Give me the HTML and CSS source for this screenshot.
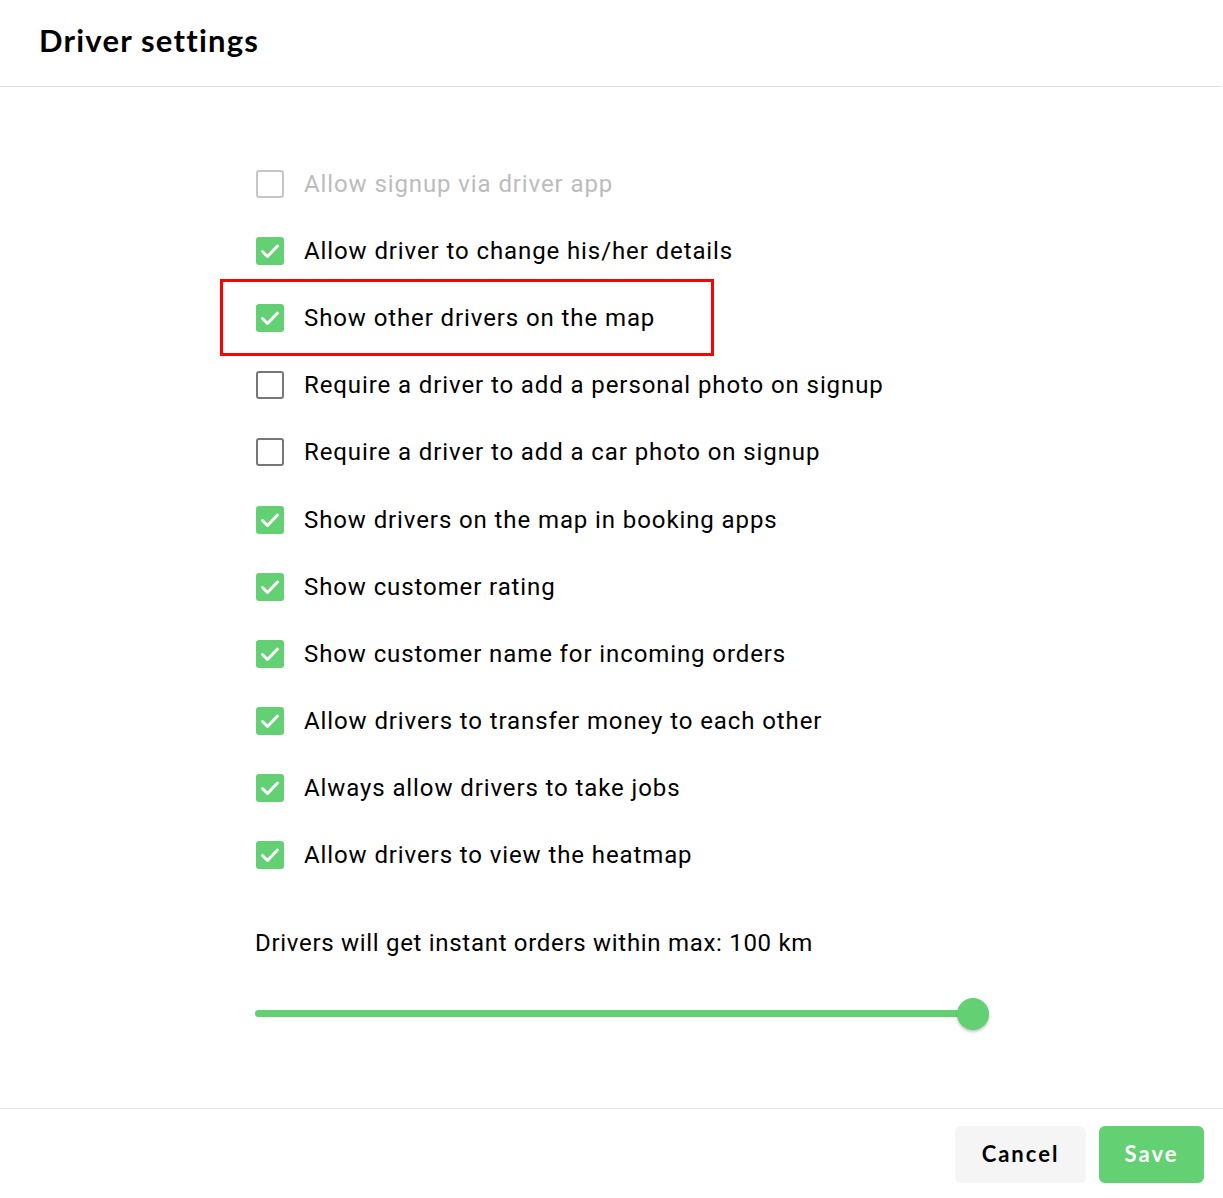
FILE: index.html
```html
<!DOCTYPE html>
<html lang="en">
<head>
<meta charset="utf-8">
<title>Driver settings</title>
<link rel="stylesheet" href="styles.css">
</head>
<body>
<div class="modal">
  <header class="modal-header">
    <h1 class="modal-title">Driver settings</h1>
  </header>
  <main class="modal-body">
    <ul class="options">
      <li class="option option--disabled"><span class="box"></span><span class="label">Allow signup via driver app</span></li>
      <li class="option"><span class="box box--checked"><svg viewBox="0 0 28 28"><path d="M6.5 14.5l5 5L21.5 9" /></svg></span><span class="label">Allow driver to change his/her details</span></li>
      <li class="option option--highlight"><span class="box box--checked"><svg viewBox="0 0 28 28"><path d="M6.5 14.5l5 5L21.5 9" /></svg></span><span class="label">Show other drivers on the map</span><span class="highlight"></span></li>
      <li class="option"><span class="box"></span><span class="label">Require a driver to add a personal photo on signup</span></li>
      <li class="option"><span class="box"></span><span class="label">Require a driver to add a car photo on signup</span></li>
      <li class="option"><span class="box box--checked"><svg viewBox="0 0 28 28"><path d="M6.5 14.5l5 5L21.5 9" /></svg></span><span class="label">Show drivers on the map in booking apps</span></li>
      <li class="option"><span class="box box--checked"><svg viewBox="0 0 28 28"><path d="M6.5 14.5l5 5L21.5 9" /></svg></span><span class="label">Show customer rating</span></li>
      <li class="option"><span class="box box--checked"><svg viewBox="0 0 28 28"><path d="M6.5 14.5l5 5L21.5 9" /></svg></span><span class="label">Show customer name for incoming orders</span></li>
      <li class="option"><span class="box box--checked"><svg viewBox="0 0 28 28"><path d="M6.5 14.5l5 5L21.5 9" /></svg></span><span class="label">Allow drivers to transfer money to each other</span></li>
      <li class="option"><span class="box box--checked"><svg viewBox="0 0 28 28"><path d="M6.5 14.5l5 5L21.5 9" /></svg></span><span class="label">Always allow drivers to take jobs</span></li>
      <li class="option"><span class="box box--checked"><svg viewBox="0 0 28 28"><path d="M6.5 14.5l5 5L21.5 9" /></svg></span><span class="label">Allow drivers to view the heatmap</span></li>
    </ul>
    <div class="range">
      <p class="range-label">Drivers will get instant orders within max: 100 km</p>
      <div class="slider">
        <div class="track"><span class="thumb"></span></div>
      </div>
    </div>
  </main>
  <footer class="modal-footer">
    <button class="btn btn--cancel">Cancel</button>
    <button class="btn btn--save">Save</button>
  </footer>
</div>
</body>
</html>
```
FILE: styles.css
```css
* { box-sizing: border-box; }
html, body { margin: 0; padding: 0; background: #fff; }
body { font-family: Roboto, "Liberation Sans", sans-serif; color: #000; }

.modal {
  width: 1223px;
  height: 1198px;
  display: flex;
  flex-direction: column;
}

.modal-header {
  height: 87px;
  border-bottom: 1px solid #e2e2e2;
  padding: 0 39px;
  display: flex;
  align-items: center;
  margin-right: 1px;
}
.modal-title {
  margin: 0 0 7px;
  font-family: Lato, "Noto Sans", sans-serif;
  font-weight: 700;
  font-size: 31px;
  letter-spacing: 1.2px;
  color: #000;
}

.modal-body {
  flex: 1;
  padding: 63px 0 0 256px;
}

.options {
  list-style: none;
  margin: 0;
  padding: 0;
}
.option {
  position: relative;
  height: 67.2px;
  display: flex;
  align-items: center;
  gap: 20px;
  font-size: 24px;
  line-height: 1;
  letter-spacing: 0.9px;
}
.label { color: #000; }
.option--disabled .label { color: #bcbcbc; }

.box {
  width: 28px;
  height: 28px;
  border: 2.5px solid #777;
  border-radius: 3px;
  flex: none;
  display: flex;
}
.option--disabled .box { border-color: #c6c6c6; }
.box--checked {
  border: none;
  background: #62d073;
}
.box svg { width: 28px; height: 28px; }
.box path {
  fill: none;
  stroke: #fff;
  stroke-width: 3;
  stroke-linecap: round;
  stroke-linejoin: round;
}

.highlight {
  position: absolute;
  left: -36px;
  top: -5.6px;
  width: 494px;
  height: 77px;
  border: 3px solid #f00;
  pointer-events: none;
}

.range { padding-top: 39px; margin-left: -1px; }
.range-label {
  margin: 0;
  font-size: 24px;
  line-height: 30px;
  letter-spacing: 0.7px;
}
.slider {
  padding-top: 52px;
  width: 735px;
}
.track {
  position: relative;
  height: 7px;
  width: 718px;
  border-radius: 4px;
  background: #62d073;
}
.thumb {
  position: absolute;
  right: -16px;
  top: 50%;
  width: 32px;
  height: 32px;
  margin-top: -16px;
  border-radius: 50%;
  background: #62d073;
  box-shadow: 0 2px 3px rgba(0,0,0,0.22);
}

.modal-footer {
  height: 90px;
  border-top: 1px solid #e2e2e2;
  display: flex;
  justify-content: flex-end;
  align-items: flex-start;
  gap: 13px;
  padding: 17px 19px 0 0;
}
.btn {
  height: 57px;
  padding: 0 0 3px;
  border: none;
  border-radius: 6px;
  font-family: Lato, "Noto Sans", sans-serif;
  font-weight: 700;
  font-size: 22px;
  letter-spacing: 2px;
  cursor: pointer;
}
.btn--cancel {
  width: 131px;
  background: #f5f5f5;
  color: #000;
}
.btn--save {
  width: 105px;
  background: #62d073;
  color: #fff;
}
```
